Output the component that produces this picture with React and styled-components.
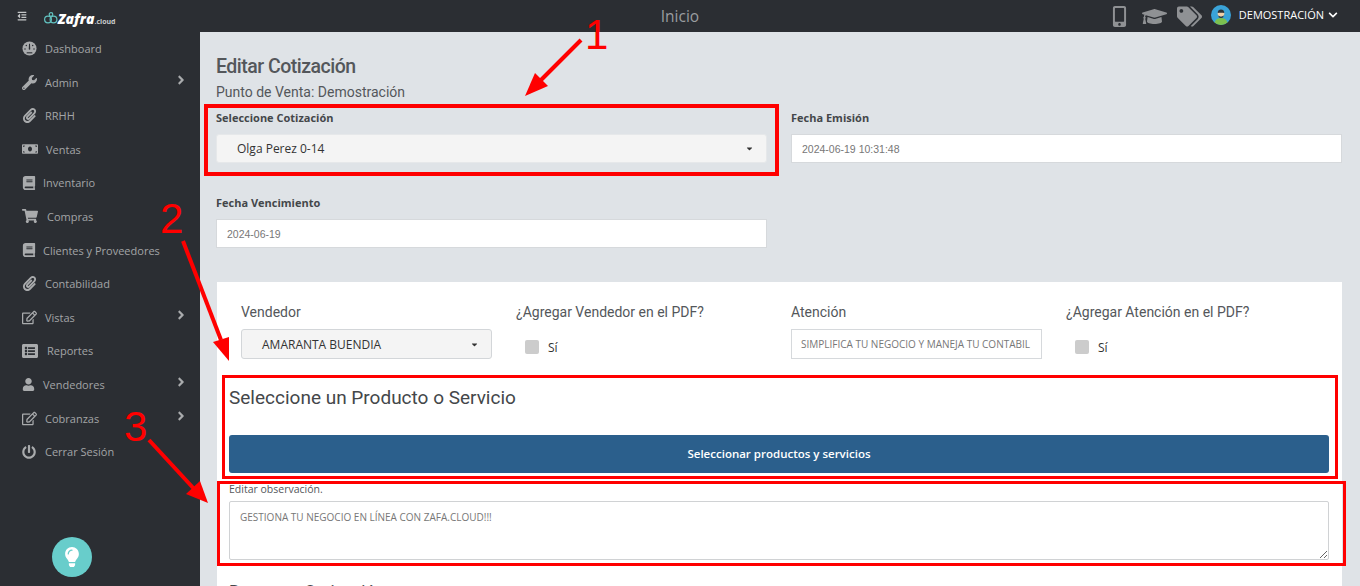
import React from "react";
import styled, { createGlobalStyle } from "styled-components";
import {
  FaWrench,
  FaPaperclip,
  FaMoneyBill,
  FaBook,
  FaShoppingCart,
  FaRegEdit,
  FaListAlt,
  FaUser,
  FaPowerOff,
  FaLightbulb,
  FaOutdent,
  FaMobileAlt,
  FaGraduationCap,
  FaTags,
  FaAngleRight,
  FaChevronDown,
  FaCaretDown,
} from "react-icons/fa";

const GlobalStyle = createGlobalStyle`
  html, body {
    margin: 0;
    height: 586px;
    overflow: hidden;
    background: #dfe3e7;
    font-family: "Open Sans", "Liberation Sans", sans-serif;
  }
  * { box-sizing: border-box; }
`;

// the old round dashboard dial, the icon package only has the half one
const DialIcon = ({ size }) => (
  <svg width={size} height={size} viewBox="0 0 16 16">
    <circle cx="8" cy="8" r="7.500" fill="currentColor" />
    <g fill="#2b2e33">
      <path d="M7.200 8.500 7.500 2.800h1l.3 5.700a.8.800 0 0 1-1.600 0z" />
      <circle cx="4.600" cy="4.800" r=".8" />
      <circle cx="11.400" cy="4.800" r=".8" />
      <circle cx="3.200" cy="8.400" r=".8" />
      <circle cx="12.800" cy="8.400" r=".8" />
      <path d="M5 12h6v1.200H5z" />
    </g>
  </svg>
);

const menuItems = [
  { label: "Dashboard", icon: DialIcon, size: 15, gap: 8 },
  { label: "Admin", icon: FaWrench, size: 15, gap: 8, more: true },
  { label: "RRHH", icon: FaPaperclip, size: 15, gap: 8 },
  { label: "Ventas", icon: FaMoneyBill, size: 16, gap: 8 },
  { label: "Inventario", icon: FaBook, size: 14, gap: 7 },
  { label: "Compras", icon: FaShoppingCart, size: 16, gap: 9 },
  { label: "Clientes y Proveedores", icon: FaBook, size: 14, gap: 7 },
  { label: "Contabilidad", icon: FaPaperclip, size: 15, gap: 8 },
  { label: "Vistas", icon: FaRegEdit, size: 15, gap: 8, more: true },
  { label: "Reportes", icon: FaListAlt, size: 16, gap: 9 },
  { label: "Vendedores", icon: FaUser, size: 13, gap: 8, more: true },
  { label: "Cobranzas", icon: FaRegEdit, size: 15, gap: 8, more: true },
  { label: "Cerrar Sesión", icon: FaPowerOff, size: 14, gap: 9 },
];

function App() {
  return (
    <Page>
      <GlobalStyle />
      <Header>
        <Brand>
          <MenuToggle>
            <FaOutdent />
          </MenuToggle>
          <Logo>
            <svg width="14" height="12" viewBox="0 0 14 12" fill="none" stroke="#62c2c0" strokeWidth="1.2">
              <circle cx="4" cy="7.500" r="3.400" />
              <circle cx="9.500" cy="7.500" r="3.400" />
              <circle cx="7" cy="2.400" r="1.800" />
            </svg>
            <LogoName>Zafra</LogoName>
            <LogoSuffix>.cloud</LogoSuffix>
          </Logo>
        </Brand>
        <HeaderTitle>Inicio</HeaderTitle>
        <HeaderTools>
          <ToolIcon $size={21}>
            <FaMobileAlt />
          </ToolIcon>
          <ToolIcon $size={25}>
            <FaGraduationCap />
          </ToolIcon>
          <ToolIcon $size={25}>
            <FaTags />
          </ToolIcon>
          <Avatar>
            <svg width="20" height="20" viewBox="0 0 20 20">
              <circle cx="10" cy="10" r="10" fill="#3aa3d8" />
              <path d="M3.500 17.500c1-3.400 3.400-4.600 6.500-4.600s5.500 1.200 6.500 4.600A10 10 0 0 1 3.500 17.500z" fill="#7cc04f" />
              <circle cx="10" cy="8.500" r="3.300" fill="#f2cfa8" />
              <path d="M6.700 8c0-2.400 1.400-3.500 3.300-3.500s3.300 1.100 3.300 3.500c-2-.3-4.600-.3-6.600 0z" fill="#2c3338" />
              <path d="M7.500 10c.6 2.200 4.400 2.200 5 0l-.2 2.200c-1.200 1-3.400 1-4.600 0z" fill="#2c3338" />
            </svg>
          </Avatar>
          <UserName>
            DEMOSTRACIÓN <FaChevronDown />
          </UserName>
        </HeaderTools>
      </Header>

      <Body>
        <Sidebar>
          <Menu>
            {menuItems.map((item) => (
              <MenuItem key={item.label} $gap={item.gap}>
                <item.icon size={item.size} />
                <span>{item.label}</span>
                {item.more && (
                  <MenuMore>
                    <FaAngleRight />
                  </MenuMore>
                )}
              </MenuItem>
            ))}
          </Menu>
          <HelpButton>
            <FaLightbulb />
          </HelpButton>
        </Sidebar>

        <Content>
          <Title>Editar Cotización</Title>
          <Subtitle>Punto de Venta: Demostración</Subtitle>

          <FormGrid>
            <Field>
              <BoldLabel>Seleccione Cotización</BoldLabel>
              <SelectBox>
                Olga Perez 0-14
                <FaCaretDown />
              </SelectBox>
            </Field>
            <Field>
              <BoldLabel>Fecha Emisión</BoldLabel>
              <DateBox>2024-06-19 10:31:48</DateBox>
            </Field>
            <Field>
              <BoldLabel>Fecha Vencimiento</BoldLabel>
              <DateBox>2024-06-19</DateBox>
            </Field>
          </FormGrid>

          <Card>
            <CardRow>
              <div>
                <SoftLabel>Vendedor</SoftLabel>
                <SelectBox $tall>
                  AMARANTA BUENDIA
                  <FaCaretDown />
                </SelectBox>
              </div>
              <div>
                <SoftLabel>¿Agregar Vendedor en el PDF?</SoftLabel>
                <CheckRow>
                  <CheckMark />
                  Sí
                </CheckRow>
              </div>
              <div>
                <SoftLabel>Atención</SoftLabel>
                <TextBox $tall>SIMPLIFICA TU NEGOCIO Y MANEJA TU CONTABIL</TextBox>
              </div>
              <div>
                <SoftLabel>¿Agregar Atención en el PDF?</SoftLabel>
                <CheckRow>
                  <CheckMark />
                  Sí
                </CheckRow>
              </div>
            </CardRow>

            <SectionTitle>Seleccione un Producto o Servicio</SectionTitle>
            <PrimaryButton>Seleccionar productos y servicios</PrimaryButton>

            <NoteLabel>Editar observación.</NoteLabel>
            <NoteArea readOnly value="GESTIONA TU NEGOCIO EN LÍNEA CON ZAFA.CLOUD!!!" />

            <SectionTitle $small>Resumen Cotización</SectionTitle>
          </Card>
        </Content>
      </Body>

      <RedBox $x={204} $y={104} $w={575} $h={72} $border={4} />
      <RedBox $x={222} $y={375} $w={1116} $h={104} $border={3} />
      <RedBox $x={217} $y={481} $w={1129} $h={85} $border={3} />

      <Arrows width="1360" height="586" viewBox="0 0 1360 586">
        <g stroke="#ff0000" strokeWidth="4" fill="#ff0000">
          <path d="M581 40 L536 85" />
          <path d="M183 241 L221 340" />
          <path d="M149 440 L196 491" />
        </g>
        <g fill="#ff0000">
          <path d="M525 96 L535 73 L548 86 Z" />
          <path d="M229 361 L213 342 L229 337 Z" />
          <path d="M208 503 L186 494 L200 481 Z" />
        </g>
      </Arrows>
      <Mark $x={585} $y={11}>1</Mark>
      <Mark $x={160} $y={195}>2</Mark>
      <Mark $x={124} $y={403}>3</Mark>
    </Page>
  );
}

export default App;

const heading = `"Roboto", sans-serif`;

const Page = styled.div`
  position: relative;
  width: 1360px;
  height: 586px;
  overflow: hidden;
  display: flex;
  flex-direction: column;
`;

const Header = styled.header`
  flex: 0 0 32px;
  display: grid;
  grid-template-columns: 1fr auto 1fr;
  align-items: center;
  background: #2b2e33;
`;

const Brand = styled.div`
  display: flex;
  align-items: center;
  padding-left: 17px;
`;

const MenuToggle = styled.div`
  display: flex;
  font-size: 10px;
  color: #c4c6c8;
  margin-right: 17px;
`;

const Logo = styled.div`
  display: flex;
  align-items: baseline;
  margin-top: 5px;
  color: #fff;
`;

const LogoName = styled.span`
  font-size: 14px;
  font-weight: 800;
  font-style: italic;
`;

const LogoSuffix = styled.span`
  font-size: 7px;
  font-weight: 700;
  color: #c9cbcd;
`;

const HeaderTitle = styled.div`
  font-size: 15.5px;
  color: #9a9da0;
`;

const HeaderTools = styled.div`
  display: flex;
  align-items: center;
  justify-content: flex-end;
  padding-right: 22px;
`;

const ToolIcon = styled.span`
  display: flex;
  justify-content: center;
  width: 35px;
  font-size: ${(p) => p.$size}px;
  color: #8f9194;
`;

const Avatar = styled.span`
  display: flex;
  margin: -2px 8px 0 4px;
`;

const UserName = styled.span`
  display: flex;
  align-items: center;
  gap: 4px;
  margin-top: -3px;
  font-size: 11px;
  color: #fff;
  white-space: nowrap;

  svg {
    font-size: 10px;
  }
`;

const Body = styled.div`
  flex: 1;
  display: flex;
  min-height: 0;
`;

const Sidebar = styled.aside`
  flex: 0 0 200px;
  display: flex;
  flex-direction: column;
  background: #2b2e33;
`;

const Menu = styled.nav`
  margin-top: -0.3px;
  padding-left: 22px;
`;

const MenuItem = styled.div`
  display: flex;
  align-items: center;
  gap: ${(p) => p.$gap}px;
  height: 33.6px;
  font-size: 11px;
  color: #a3a5a7;

  svg {
    color: #a9abad;
  }
`;

const MenuMore = styled.span`
  display: flex;
  margin: -4px 12px 0 auto;
  font-size: 14px;
`;

const HelpButton = styled.div`
  display: flex;
  align-items: center;
  justify-content: center;
  width: 40px;
  height: 40px;
  margin: 69px 0 0 52px;
  border-radius: 50%;
  background: #68cdcb;
  color: #fff;
  font-size: 20px;
`;

const Content = styled.main`
  flex: 1;
  min-width: 0;
  padding: 21px 18px 0 16px;
`;

const Title = styled.h1`
  margin: 0;
  height: 27px;
  font-family: ${heading};
  font-size: 19.5px;
  line-height: 27px;
  font-weight: 500;
  letter-spacing: -0.5px;
  color: #54575b;
`;

const Subtitle = styled.div`
  margin-top: 3px;
  height: 18px;
  font-family: ${heading};
  font-size: 14px;
  line-height: 18px;
  color: #54575b;
`;

const FormGrid = styled.div`
  display: grid;
  grid-template-columns: 551px 551px;
  column-gap: 24px;
  row-gap: 31px;
  margin-top: 8px;
`;

const Field = styled.div`
  display: flex;
  flex-direction: column;
`;

const BoldLabel = styled.label`
  height: 17px;
  margin-bottom: 8px;
  font-size: 11px;
  line-height: 17px;
  font-weight: 700;
  color: #44474a;
`;

const SelectBox = styled.div`
  display: flex;
  align-items: center;
  justify-content: space-between;
  height: ${(p) => (p.$tall ? 30 : 29)}px;
  padding: 0 12px ${(p) => (p.$tall ? 0 : 1)}px 20px;
  border: 1px solid ${(p) => (p.$tall ? "#d3d6d9" : "#e6e8ea")};
  border-radius: 3px;
  background: #f4f4f4;
  font-size: 12px;
  color: #333;

  svg {
    font-size: 9px;
  }
`;

const TextBox = styled.div`
  display: flex;
  align-items: center;
  height: ${(p) => (p.$tall ? 30 : 29)}px;
  padding: 0 9px;
  border: 1px solid #d6d9dc;
  background: #fff;
  font-size: 10px;
  color: #777;
  white-space: nowrap;
  overflow: hidden;
`;

const DateBox = styled(TextBox)`
  padding: 0 10px;
  font-family: "Liberation Sans", sans-serif;
  font-size: 10.5px;
`;

const Card = styled.section`
  margin: 34px 0 0 1px;
  padding: 20px 13px 0 12px;
  background: #fff;
`;

const CardRow = styled.div`
  display: grid;
  grid-template-columns: repeat(4, 251px);
  column-gap: 24px;
  padding-left: 12px;
`;

const SoftLabel = styled.div`
  height: 20px;
  margin-bottom: 7px;
  font-family: ${heading};
  font-size: 14px;
  line-height: 20px;
  color: #54575b;
`;

const CheckRow = styled.div`
  display: flex;
  align-items: center;
  gap: 9px;
  height: 30px;
  padding: 6px 0 0 9px;
  font-size: 12px;
  color: #333;
`;

const CheckMark = styled.span`
  width: 14px;
  height: 14px;
  border-radius: 2px;
  background: #ccc;
`;

const SectionTitle = styled.h2`
  margin: ${(p) => (p.$small ? "18px" : "25px")} 0 0;
  height: 27px;
  font-family: ${heading};
  font-size: ${(p) => (p.$small ? 17 : 19)}px;
  line-height: 27px;
  font-weight: 400;
  color: #44474a;
`;

const PrimaryButton = styled.div`
  display: flex;
  align-items: center;
  justify-content: center;
  height: 38px;
  margin-top: 24px;
  padding-bottom: 2px;
  border-radius: 3px;
  background: #2b5f8c;
  font-size: 11.5px;
  font-weight: 600;
  color: #fff;
`;

const NoteLabel = styled.div`
  height: 14px;
  margin-top: 9px;
  font-size: 10.5px;
  line-height: 14px;
  color: #54575b;
`;

const NoteArea = styled.textarea`
  display: block;
  width: 100%;
  height: 59px;
  margin-top: 5px;
  padding: 8px 10px;
  border: 1px solid #d0d2d4;
  border-radius: 2px;
  background: #fff;
  font-family: "Open Sans", sans-serif;
  font-size: 10px;
  color: #777;
  outline: none;
`;

const RedBox = styled.div`
  position: absolute;
  left: ${(p) => p.$x}px;
  top: ${(p) => p.$y}px;
  width: ${(p) => p.$w}px;
  height: ${(p) => p.$h}px;
  border: ${(p) => p.$border}px solid #ff0000;
  pointer-events: none;
`;

const Arrows = styled.svg`
  position: absolute;
  left: 0;
  top: 0;
  pointer-events: none;
`;

const Mark = styled.span`
  position: absolute;
  left: ${(p) => p.$x}px;
  top: ${(p) => p.$y}px;
  font-family: "Liberation Sans", sans-serif;
  font-size: 42px;
  line-height: 48px;
  color: #ff0000;
`;
